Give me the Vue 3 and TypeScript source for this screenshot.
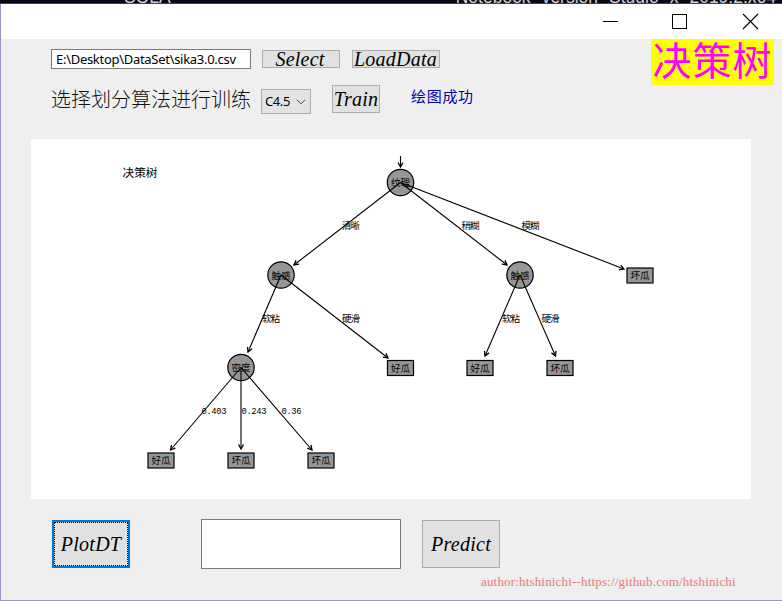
<script setup lang="ts">
import { ref } from 'vue'

interface TreeNode { x: number; y: number; label: string; leaf?: boolean }
interface Edge { x1: number; y1: number; x2: number; y2: number; label: string; lx: number; ly: number }

const path = ref('E:\\Desktop\\DataSet\\sika3.0.csv')
const prediction = ref('')

const nodes: TreeNode[] = [
  { x: 369.5, y: 43.5, label: '纹理' },
  { x: 250, y: 136, label: '触感' },
  { x: 489, y: 136, label: '触感' },
  { x: 210, y: 228.5, label: '密度' },
  { x: 609, y: 136.5, label: '坏瓜', leaf: true },
  { x: 369.5, y: 229, label: '好瓜', leaf: true },
  { x: 449, y: 229, label: '好瓜', leaf: true },
  { x: 529, y: 229, label: '坏瓜', leaf: true },
  { x: 130, y: 321.5, label: '好瓜', leaf: true },
  { x: 210, y: 321.5, label: '坏瓜', leaf: true },
  { x: 290, y: 321.5, label: '坏瓜', leaf: true },
]

const edges: Edge[] = [
  { x1: 369.5, y1: 43.5, x2: 263, y2: 126, label: '清晰', lx: 311, ly: 90 },
  { x1: 369.5, y1: 43.5, x2: 476, y2: 126, label: '稍糊', lx: 430.5, ly: 90 },
  { x1: 369.5, y1: 43.5, x2: 593, y2: 130, label: '模糊', lx: 490.5, ly: 90 },
  { x1: 250, y1: 136, x2: 217, y2: 213, label: '软粘', lx: 231, ly: 182.5 },
  { x1: 250, y1: 136, x2: 357, y2: 219, label: '硬滑', lx: 311, ly: 182.5 },
  { x1: 489, y1: 136, x2: 454, y2: 217, label: '软粘', lx: 471, ly: 182.5 },
  { x1: 489, y1: 136, x2: 524.5, y2: 217, label: '硬滑', lx: 510.5, ly: 182.5 },
  { x1: 210, y1: 228.5, x2: 139.5, y2: 311, label: '0.403', lx: 170.5, ly: 275 },
  { x1: 210, y1: 228.5, x2: 210, y2: 310, label: '0.243', lx: 210.5, ly: 275 },
  { x1: 210, y1: 228.5, x2: 281, y2: 311, label: '0.36', lx: 250.5, ly: 275 },
]

const isNumeric = (s: string): boolean => s.includes('.')
</script>

<template>
  <div class="screen">
    <div class="backdrop"><span>SQLA</span><span>Notebook</span><span>version</span><span>Studio</span><span>x</span><span>2019.2.x64</span></div>
    <div class="window">
      <header class="titlebar">
        <svg width="160" height="18" viewBox="0 0 160 18" fill="none" stroke="#000" shape-rendering="crispEdges">
          <path d="M1 9.5h15M70.5 2.500h14v14h-14z" />
          <path d="M141 2l15 15M156 2l-15 15" shape-rendering="auto" stroke-width="1.1" />
        </svg>
      </header>
      <main class="content">
        <div class="top">
          <div class="controls">
            <div class="row file-row">
              <input v-model="path" class="path" type="text" />
              <button class="btn select">Select</button>
              <button class="btn load">LoadData</button>
            </div>
            <div class="row train-row">
              <span class="prompt">选择划分算法进行训练</span>
              <button class="combo"><span>C4.5</span>
                <svg width="10" height="6" viewBox="0 0 10 6" fill="none" stroke="#444"><path d="M1 .8l4 4 4-4" /></svg>
              </button>
              <button class="btn train">Train</button>
              <span class="status">绘图成功</span>
            </div>
          </div>
          <h1 class="brand">决策树</h1>
        </div>

        <svg class="plot" width="720" height="360" viewBox="0 0 720 360">
          <defs>
            <marker id="tip" viewBox="0 0 8 8" refX="6.500" refY="4" markerWidth="8" markerHeight="8" markerUnits="userSpaceOnUse" orient="auto">
              <path d="M2 1.500L6.500 4L2 6.500" fill="none" stroke="#000" stroke-width="1.300" />
            </marker>
          </defs>
          <text class="title" x="91.500" y="38" textLength="35">决策树</text>
          <g v-for="(n, i) in nodes" :key="`n${i}`">
            <rect v-if="n.leaf" class="shape" :x="n.x - 13" :y="n.y - 7.5" width="26" height="15" />
            <circle v-else class="shape" :cx="n.x" :cy="n.y" r="13.2" />
            <text class="label mid" :x="n.x" :y="n.y + 3.5">{{ n.label }}</text>
          </g>
          <line class="edge" x1="369.500" y1="17" x2="369.500" y2="28" marker-end="url(#tip)" />
          <g v-for="(e, i) in edges" :key="`e${i}`">
            <line class="edge" :x1="e.x1" :y1="e.y1" :x2="e.x2" :y2="e.y2" marker-end="url(#tip)" />
            <text class="label" :class="{ num: isNumeric(e.label) }" :x="e.lx" :y="e.ly" :textLength="isNumeric(e.label) ? e.label.length * 5 : 18">{{ e.label }}</text>
          </g>
        </svg>

        <div class="row bottom">
          <button class="btn plot-btn"><span>PlotDT</span></button>
          <input v-model="prediction" class="result" type="text" />
          <button class="btn predict">Predict</button>
        </div>
        <footer class="author">author:htshinichi--https://github.com/htshinichi</footer>
      </main>
    </div>
  </div>
</template>

<style>
body { margin: 0; overflow: hidden; }
</style>

<style scoped>
* { box-sizing: border-box; }
.screen { width: 782px; height: 601px; display: flex; flex-direction: column; overflow: hidden; background: #efefef; }
.backdrop { height: 4px; flex: none; background: #090716; border-bottom: 1px solid #444154; overflow: hidden; display: flex; gap: 11px; padding-left: 124px; color: #d0d0d6; font: 17.5px/17px "Liberation Sans", sans-serif; }
.backdrop span { margin-top: -11px; height: 17px; }
.backdrop span:nth-child(2) { margin-left: 274px; }
.window { flex: 1; display: flex; flex-direction: column; border-left: 1px solid #9795cb; border-bottom: 1px solid #9795cb; min-height: 0; }
.titlebar { height: 35px; flex: none; background: #fff; display: flex; justify-content: flex-end; padding: 8px 20px 0 0; }
.content { flex: 1; display: flex; flex-direction: column; min-height: 0; }
.top { height: 100px; flex: none; display: flex; justify-content: space-between; }
.controls { padding: 10px 0 0 50px; }
.row { display: flex; align-items: flex-start; }
.btn { display: flex; align-items: center; justify-content: center; margin: 0; padding: 0; border: 1px solid #adadad; border-radius: 0; background: #e1e1e1; color: #000; font: italic 20px/20px "Liberation Serif", serif; letter-spacing: .25px; white-space: nowrap; }
input { margin: 0; border: 1px solid #7a7a7a; border-radius: 0; background: #fff; outline: none; }
.path { width: 200px; height: 20px; padding: 0 4px; font: 13px/16px "Noto Sans", sans-serif; letter-spacing: -.29px; color: #000; }
.file-row { height: 36px; }
.select { width: 78px; height: 18px; margin: 1px 0 0 11px; padding-right: 2px; }
.load { width: 88px; height: 18px; margin: 1px 0 0 12px; padding-right: 1px; }
.prompt { width: 200px; margin-top: 1px; font: 300 20px/28px "Liberation Serif", "Noto Sans CJK SC", serif; color: #111; white-space: nowrap; }
.combo { display: flex; align-items: center; justify-content: space-between; width: 50px; height: 25px; margin: 4px 0 0 10px; padding: 0 4px 0 3px; border: 1px solid #adadad; border-radius: 0; background: #e3e3e3; color: #000; font: 13px/20px "Noto Sans", sans-serif; letter-spacing: -.4px; }
.combo span { padding-bottom: 2px; }
.train { width: 48px; height: 28px; margin-left: 21px; }
.status { margin: 0 0 0 31px; color: #0000a8; font: 400 15px/22px "Noto Sans CJK SC", sans-serif; letter-spacing: .7px; }
.brand { width: 123px; height: 46px; margin: 0 8px 0 0; background: #ff0; color: #f0f; font: 400 39px/46px "Liberation Serif", "Noto Sans CJK SC", serif; letter-spacing: 1px; text-align: center; white-space: nowrap; }
.plot { display: block; flex: none; margin-left: 30px; background: #fff; }
.title { font: 11.700px "Noto Sans CJK SC", sans-serif; }
.label { font: 9.500px "Noto Sans CJK SC", sans-serif; fill: #000; }
.num { font: 8.800px "Liberation Mono", monospace; }
.mid { text-anchor: middle; }
.shape { fill: #969696; stroke: #000; stroke-width: 1.200; }
.edge { stroke: #000; stroke-width: 1.100; }
.bottom { height: 77px; flex: none; padding: 20px 0 0 51px; }
.plot-btn { width: 78px; height: 48px; margin-top: 1px; border: 2px solid #0078d7; }
.plot-btn span { display: flex; align-items: center; justify-content: center; width: 100%; height: 100%; border: 1px dotted #000; }
.result { width: 200px; height: 50px; margin-left: 71px; }
.predict { width: 78px; height: 48px; margin: 1px 0 0 21px; }
.author { margin-top: -1px; padding-left: 480px; color: #e67b7b; font: 13px/14px "Liberation Serif", serif; letter-spacing: .17px; white-space: nowrap; }
</style>
